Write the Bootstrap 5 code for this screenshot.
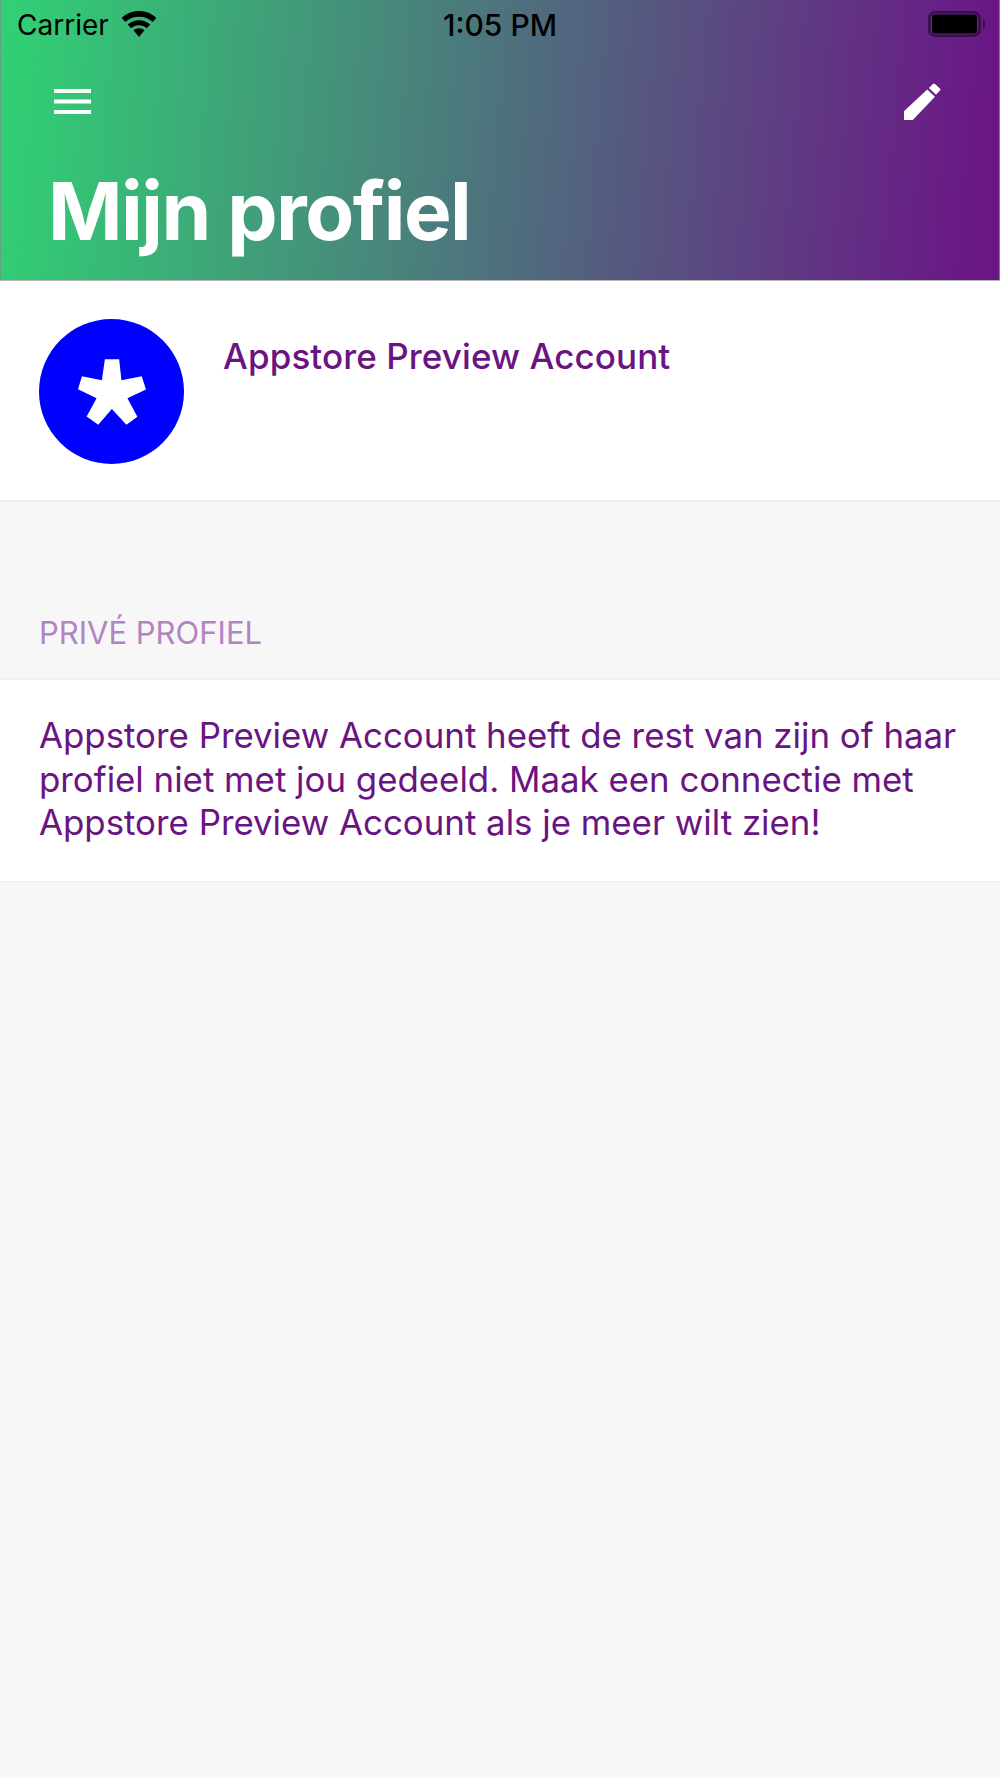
<!DOCTYPE html>
<html lang="en">
<head>
    <meta charset="UTF-8">
    <meta name="viewport" content="width=device-width, initial-scale=1.0">
    <title>Mijn profiel</title>
    <link href="https://cdn.jsdelivr.net/npm/bootstrap@5.3.0/dist/css/bootstrap.min.css" rel="stylesheet">
    <style>
        body {
            background: #f7f7f7;
            font-family: Inter, "Liberation Sans", sans-serif;
            color: #6a1482;
            min-height: 1778px;
        }
        .app-header {
            height: 281px;
            background: linear-gradient(95deg, #30d274 0%, #6a1786 97%);
            border-bottom: 1px solid #b5b5b5;
            box-shadow: inset 1px 0 0 rgba(130, 130, 130, .6), inset -1px 0 0 rgba(170, 170, 170, .6);
        }
        .status-row {
            height: 50px;
            padding: 0 13px 0 17px;
            color: #000;
            font-size: 28px;
        }
        .status-side { width: 300px; }
        .status-side-end { width: 304px; }
        .status-time { font-size: 30px; font-weight: 500; }
        .status-glyph { margin-bottom: 2px; }
        .action-row {
            height: 102px;
            padding: 0 59px 0 54px;
        }
        .page-title {
            font-size: 80px;
            font-weight: 700;
            letter-spacing: -1.5px;
            line-height: 1;
            margin: 19px 0 0 48px;
            color: #fff;
        }
        .profile-block {
            height: 221px;
            padding: 38px 39px 0;
            background: #fff;
            border-bottom: 2px solid #efefef;
        }
        .avatar-disc {
            width: 145px;
            height: 145px;
            background: #0000ff;
        }
        .profile-name {
            margin: 17px 0 0 39px;
            font-size: 35px;
            font-weight: 500;
            line-height: 40px;
            letter-spacing: .1px;
        }
        .section-label {
            height: 176px;
            padding: 0 39px 22px;
            font-size: 31px;
            color: #b384c1;
        }
        .private-note {
            height: 205px;
            padding: 34px 30px 0 39px;
            background: #fff;
            border-top: 2px solid #efefef;
            border-bottom: 2px solid #efefef;
            font-size: 34.85px;
            line-height: 43.5px;
        }
    </style>
</head>
<body>
<header class="app-header">
    <div class="status-row d-flex align-items-center justify-content-between">
        <div class="status-side d-flex align-items-center gap-2">
            <span>Carrier</span>
            <svg class="status-glyph ms-1" width="36" height="26" viewBox="0 0 37 27">
                <path d="M18.5 0C11.5 0 5.5 2.600 .5 7.200l3.900 4.200C8.200 7.900 13 6 18.500 6s10.300 1.900 14.100 5.400l3.900-4.200C31.500 2.600 25.500 0 18.500 0z"/>
                <path d="M18.500 9.500c-4.500 0-8.600 1.700-11.700 4.500l3.600 3.800c2.200-1.900 5-3.100 8.100-3.100s5.900 1.200 8.100 3.100l3.600-3.800c-3.100-2.800-7.200-4.500-11.700-4.500z"/>
                <path d="M18.500 18c-2.200 0-4.200.8-5.700 2.100l5.700 6.900 5.700-6.900c-1.500-1.300-3.500-2.100-5.700-2.100z"/>
            </svg>
        </div>
        <span class="status-time">1:05 PM</span>
        <div class="status-side-end d-flex align-items-center justify-content-end">
            <svg class="status-glyph" width="59" height="26" viewBox="0 0 59 26">
                <rect x="1.300" y="1.300" width="50.400" height="23.400" rx="6" fill="none" stroke="#000" stroke-opacity=".45" stroke-width="2.600"/>
                <rect x="4" y="3.500" width="45" height="19" rx="3"/>
                <path d="M55 8c3 1.500 3 8.500 0 10z" fill="#000" fill-opacity=".45"/>
            </svg>
        </div>
    </div>
    <div class="action-row d-flex align-items-center justify-content-between">
        <svg width="37" height="25" viewBox="0 0 37 25" fill="#fff">
            <rect width="37" height="4"/>
            <rect y="10.500" width="37" height="4"/>
            <rect y="21" width="37" height="4"/>
        </svg>
        <svg width="37" height="37" viewBox="13 247 110 110" fill="#fff">
            <path d="M13 357V331L82 266 105 288 39 357z"/>
            <path d="M87 262L99 250Q102 247 105 250L120 263Q123 266 120 269L108 282z"/>
        </svg>
    </div>
    <h1 class="page-title">Mijn profiel</h1>
</header>
<section class="profile-block d-flex align-items-start">
    <div class="avatar-disc rounded-circle d-flex align-items-center justify-content-center flex-shrink-0">
        <svg width="68" height="66" viewBox="141 145 205 197" fill="#fff">
            <path d="M222 145H265L272 208 333 196 346 236 290 262 320 318 287 342 243 295 202 342 167 317 197 262 141 235 153 196 213 208z"/>
        </svg>
    </div>
    <div class="profile-name">Appstore Preview Account</div>
</section>
<div class="section-label d-flex align-items-end">PRIVÉ PROFIEL</div>
<section class="private-note">Appstore Preview Account heeft de rest van zijn of haar profiel niet met jou gedeeld. Maak een connectie met Appstore Preview Account als je meer wilt zien!</section>
<script src="https://cdn.jsdelivr.net/npm/bootstrap@5.3.0/dist/js/bootstrap.bundle.min.js"></script>
</body>
</html>
